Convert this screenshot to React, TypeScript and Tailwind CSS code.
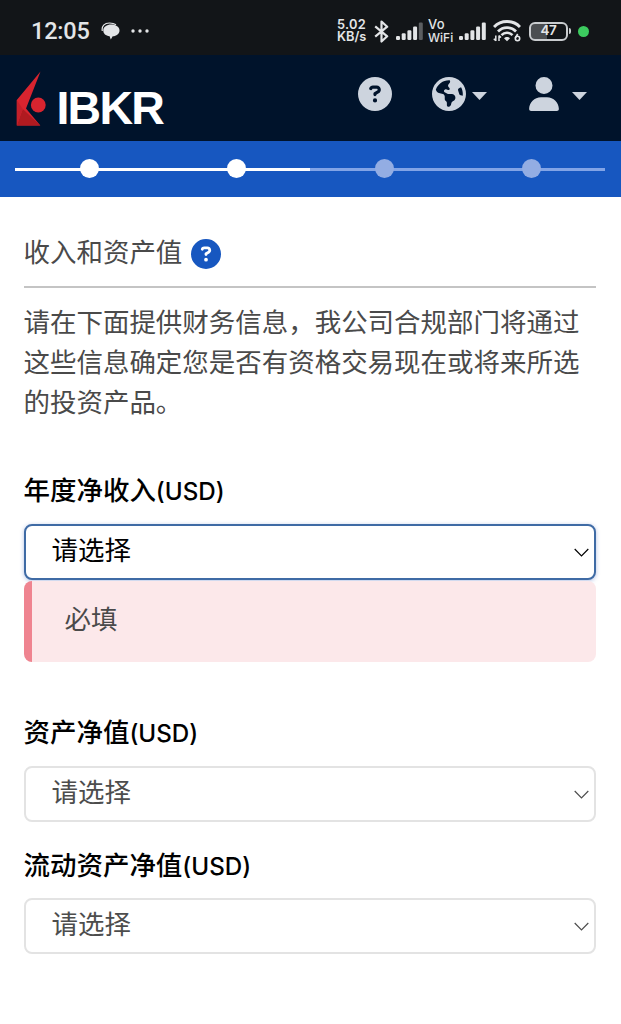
import type { ReactNode } from 'react';
import { FaCircleQuestion, FaEarthAmericas, FaUser } from 'react-icons/fa6';

const STEPS = [
  { id: 1, done: true },
  { id: 2, done: true },
  { id: 3, done: false },
  { id: 4, done: false },
];

function SignalBars({ weak = false }: { weak?: boolean }) {
  return (
    <svg className="w-[27px] h-[18px] shrink-0" viewBox="0 0 27 18" fill="#e3e5e7">
      <rect x="0" y="14" width="4" height="4" rx="1.2" />
      <rect x="5.7" y="11.3" width="4" height="6.7" rx="1.2" />
      <rect x="11.4" y="8.300" width="4" height="9.700" rx="1.2" />
      <rect x="17.100" y="4.500" width="4" height="13.500" rx="1.2" />
      <rect x="22.800" y="0.500" width="4" height="17.500" rx="1.2" fill={weak ? '#5b5e61' : '#e3e5e7'} />
    </svg>
  );
}

function StatusBar() {
  return (
    <div
      className="h-[55px] pt-[7px] pl-[31px] pr-8 flex items-center bg-[#121518] text-[#e3e5e7]"
      style={{ fontFamily: 'Roboto, sans-serif' }}
    >
      <span className="w-[70px] text-[23.500px] leading-6 tracking-[-0.2px] font-medium">12:05</span>
      {/* Mensaje */}
      <svg className="w-[19px] h-[18px]" viewBox="0 0 19 18" fill="#e3e5e7">
        <path d="M1.300 9C.4 4 3.500 1 8.500 1c2.800 0 5 .7 6.500 1.800" fill="none" stroke="#e3e5e7" strokeWidth="1.200" />
        <path d="M10.300 2.600c4.600 0 8.200 2.400 8.200 5.800 0 3.200-3 5.600-6.800 5.900l-1.900 3.200-1.200-3.300C4.700 13.700 2.300 11.500 2.300 8.400c0-3.400 3.400-5.800 8-5.800z" />
      </svg>
      <svg className="ml-[11px] w-[18px] h-1" viewBox="0 0 18 4" fill="#e3e5e7">
        <circle cx="2" cy="2" r="1.700" />
        <circle cx="9" cy="2" r="1.700" />
        <circle cx="16" cy="2" r="1.700" />
      </svg>

      <div className="ml-auto flex items-center" style={{ fontFamily: 'Inter, sans-serif' }}>
        <div className="w-[36px] -ml-px mr-px text-[12.800px] leading-[12px] font-semibold whitespace-nowrap">
          <div className="tracking-[0.3px]">5.02</div>
          <div>KB/s</div>
        </div>
        <svg className="w-[15px] h-[23px] mr-[7px]" viewBox="0 0 15 23" fill="none" stroke="#e3e5e7" strokeWidth="2.200" strokeLinejoin="round">
          <path d="M1.200 6.300l12 10L7.500 21.500V1.500l5.700 5.200-12 10" />
        </svg>
        <SignalBars weak />
        <div className="ml-[5px] w-[31px] text-[12px] leading-[13px] font-medium whitespace-nowrap">
          <div className="text-[13px] tracking-[0.300px]">Vo</div>
          <div>WiFi</div>
        </div>
        <SignalBars />
        <svg className="ml-[7px] w-[28px] h-[22px]" viewBox="0 0 28 22" fill="none" stroke="#e3e5e7">
          <path d="M1 7C8-.2 20-.2 27 7" strokeWidth="3" />
          <path d="M5 11.500c5-5.200 13-5.200 18 0" strokeWidth="2.700" />
          <path d="M8.500 15.200c3-3.400 8-3.400 11 0" strokeWidth="2.500" />
          <path d="M11 18.200c1.500-1.700 4.500-1.700 6 0L14 21.200z" fill="#e3e5e7" stroke="none" />
          <path d="M2.800 15.500v5.500M.8 18.800l2 2M6 21v-5.500M8 17.500l-2-2" strokeWidth="1.500" />
          <circle cx="24.500" cy="18.500" r="2.200" strokeWidth="1.600" />
          <path d="M22.300 18l2.400-4" strokeWidth="1.600" />
        </svg>
        <div className="ml-[8px] w-[39px] h-[19px] rounded-[6px] border-2 border-[#c9cccf] bg-linear-to-r from-[#4b4e51] from-47% to-[#121518] to-47% flex items-center justify-center text-[13.500px] font-semibold leading-none tracking-[-0.3px]">
          47
        </div>
        <div className="ml-px w-0.5 h-[6px] rounded-r bg-[#c9cccf]" />
        <div className="ml-[7px] w-[11px] h-[11px] rounded-full bg-[#3ccb5f]" />
      </div>
    </div>
  );
}

function Caret() {
  return (
    <svg className="mt-1 w-[15px] h-2 shrink-0" viewBox="0 0 15 8" fill="#cdd4de">
      <path d="M0 0h15L7.500 8z" />
    </svg>
  );
}

function Header() {
  return (
    <header className="h-[86px] pl-4 pr-[34px] flex bg-[#00132b]">
      <div className="flex">
        <svg className="mt-4 w-[30px] h-[55px]" viewBox="0 0 30 55">
          <path d="M24.500 .5L.8 29v25.500h23.500L10 37.500z" fill="#d8242f" />
          <path d="M.8 54.500l6-16.500 17.500 16.500z" fill="#b01a20" />
          <path d="M.8 29v25.500l6-16.500z" fill="#c3202a" />
          <circle cx="22.300" cy="34" r="7.400" fill="#d8242f" />
        </svg>
        <span
          className="ml-[10.500px] mt-[30px] text-[46.500px] leading-[47px] font-bold tracking-[-1.800px] text-white"
          style={{ fontFamily: '"Liberation Sans", Arial, sans-serif' }}
        >
          IBKR
        </span>
      </div>
      <div className="ml-auto mt-[22px] h-[34px] flex items-center text-[#cdd4de]">
        <FaCircleQuestion className="w-[34px] h-[34px]" />
        <FaEarthAmericas className="ml-[40px] mr-[6px] w-[34px] h-[34px]" />
        <Caret />
        <FaUser className="ml-[42px] mr-[13px] w-[30px] h-[34px]" />
        <Caret />
      </div>
    </header>
  );
}

function ProgressSteps() {
  return (
    <div className="h-14 pl-[15px] pr-4 bg-[#1757c0] grid grid-cols-4">
      {STEPS.map((step) => (
        <div key={step.id} className="relative pt-[18px] pl-px flex justify-center items-start">
          <div className={`absolute inset-x-0 top-[27px] h-[3px] ${step.done ? 'bg-white' : 'bg-[#82a4e6]'}`} />
          <div className={`relative w-[19px] h-[19px] rounded-full ${step.done ? 'bg-white' : 'bg-[#93ade3]'}`} />
        </div>
      ))}
    </div>
  );
}

function FieldLabel({ children }: { children: ReactNode }) {
  return (
    <label className="block h-10 leading-10 font-medium text-black">
      {children}
      <span className="text-[24.200px]" style={{ fontFamily: 'Inter, sans-serif' }}>
        (USD)
      </span>
    </label>
  );
}

function SelectBox({ active = false }: { active?: boolean }) {
  return (
    <button
      className={`w-full h-14 pl-[27px] pr-[5px] pb-1 flex items-center justify-between rounded-lg bg-white border-2 ${
        active ? 'border-[#3f6ba5] text-black shadow-[0_1px_4px_rgba(60,100,190,0.4)]' : 'border-[#e3e3e3] text-[#4d4d4d]'
      }`}
    >
      <span className="-ml-px -mt-0.5">请选择</span>
      <svg className="mt-1 w-[15px] h-[9px]" viewBox="0 0 15 9" fill="none" stroke="currentColor" strokeWidth="1.200">
        <path d="M.7 1l6.800 6.800L14.300 1" />
      </svg>
    </button>
  );
}

export default function App() {
  return (
    <div
      className="w-full h-screen overflow-hidden bg-white text-[26.480px] text-[#4a4a4a]"
      style={{ fontFamily: '"Noto Sans CJK SC", sans-serif' }}
    >
      <StatusBar />
      <Header />
      <ProgressSteps />

      <main className="pl-[23.500px] pr-[25px] pt-8">
        <div className="h-[59px] flex items-start gap-[9px] border-b-2 border-[#c4c4c4]">
          <h1 className="leading-[44px]">收入和资产值</h1>
          <FaCircleQuestion className="mt-[10px] w-[30px] h-[30px] text-[#1757c0]" />
        </div>
        <p className="mt-[13px] leading-10">
          请在下面提供财务信息，我公司合规部门将通过这些信息确定您是否有资格交易现在或将来所选的投资产品。
        </p>

        <div className="mt-[48px]">
          <FieldLabel>年度净收入</FieldLabel>
          <div className="mt-[15px]">
            <SelectBox active />
          </div>
          {/* Error de validacion */}
          <div className="mt-px h-[81px] pl-[33px] rounded-lg border-l-8 border-[#ef8490] bg-[#fce8ea] leading-[74px]">
            必填
          </div>
        </div>

        <div className="mt-[49px]">
          <FieldLabel>资产净值</FieldLabel>
          <div className="mt-[15px]">
            <SelectBox />
          </div>
        </div>

        <div className="mt-[22px]">
          <FieldLabel>流动资产净值</FieldLabel>
          <div className="mt-[14px]">
            <SelectBox />
          </div>
        </div>
      </main>
    </div>
  );
}
